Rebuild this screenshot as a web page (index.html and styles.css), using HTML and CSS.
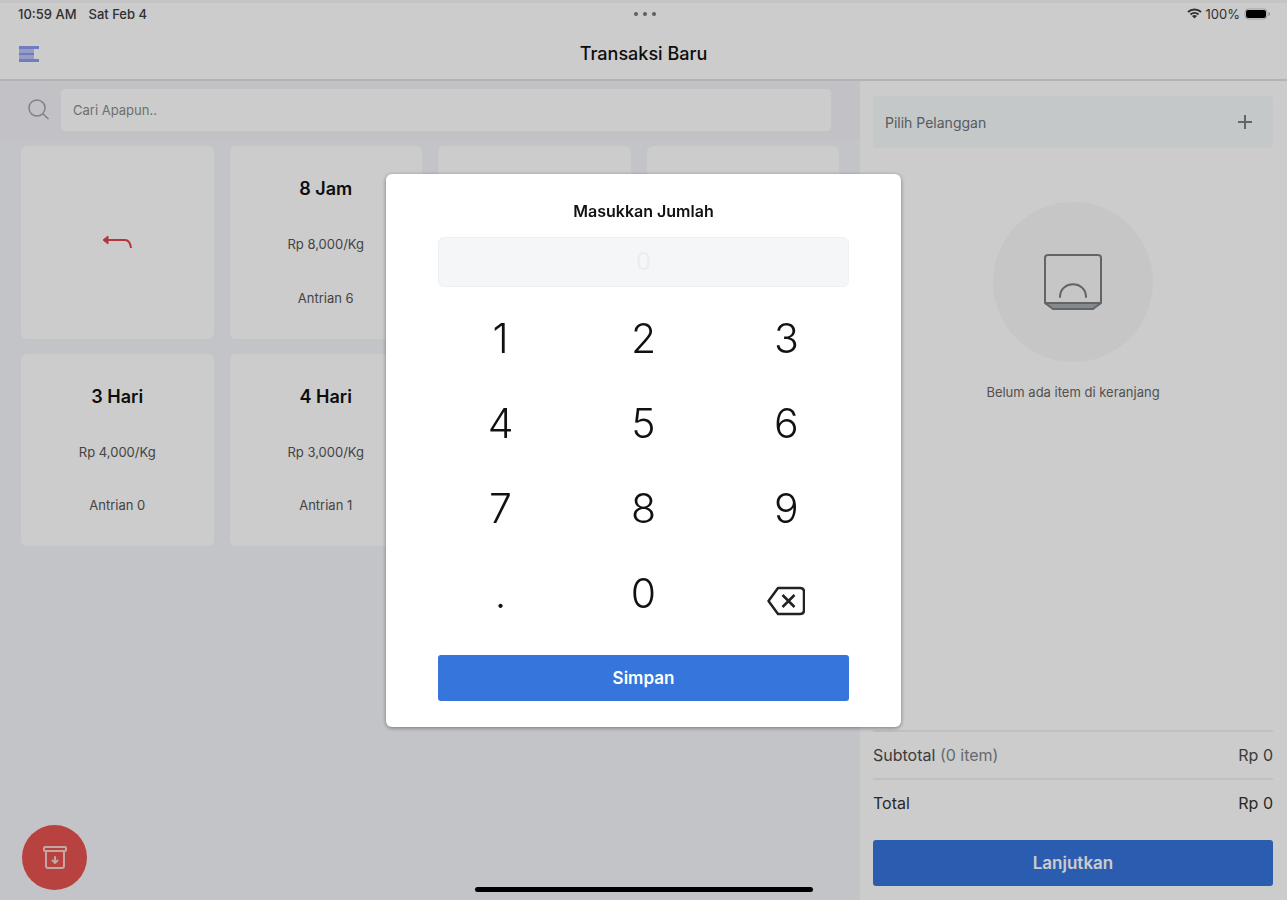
FILE: index.html
```html
<!DOCTYPE html>
<html lang="id">
<head>
<meta charset="utf-8">
<meta name="viewport" content="width=device-width, initial-scale=1">
<title>Transaksi Baru</title>
<link rel="stylesheet" href="styles.css">
</head>
<body>
<div class="app">
  <header class="header">
    <div class="status">
      <div class="status-left"><span>10:59 AM</span><span>Sat Feb 4</span></div>
      <div class="status-dots"><i></i><i></i><i></i></div>
      <div class="status-right">
        <svg width="15" height="11" viewBox="0 0 15 11" fill="none" stroke="currentColor" stroke-width="2"><path d="M1 4a9.500 9.500 0 0 1 13 0M3.500 6.500a6 6 0 0 1 8 0"/><path d="M7.500 10.500 5 8a4 4 0 0 1 5 0z" fill="currentColor" stroke="none"/></svg>
        <span>100%</span>
        <svg width="27" height="12" viewBox="0 0 27 12"><rect x="1" y="1" width="22" height="10" rx="3" fill="none" stroke="#ccc"/><rect x="2" y="2" width="20" height="8" rx="2" fill="#000"/><path d="M24.500 4v4q1.500-.5 1.500-2t-1.500-2" fill="#aaa"/></svg>
      </div>
    </div>
    <div class="navbar">
      <button class="icon-button menu" aria-label="Menu"><svg width="20" height="16" viewBox="0 0 20 16"><path d="M0 3h15v10H0z" fill="#bcc3f4"/><path d="M0 0h20v3H0zM0 7h15v2H0zM0 13h20v3H0z" fill="#8c9cf0"/></svg></button>
      <h1 class="title">Transaksi Baru</h1>
    </div>
  </header>
  <div class="columns">
    <main class="catalog">
      <div class="search">
        <label for="search" aria-label="Cari"><svg width="22" height="22" viewBox="0 0 22 22" fill="none" stroke="#a2a2a2" stroke-width="1.500" stroke-linecap="round"><circle cx="9" cy="9" r="8"/><path d="m15 15 5 4.500"/></svg></label>
        <input id="search" class="search-input" type="text" placeholder="Cari Apapun..">
      </div>
      <div class="cards">
        <button class="card back" aria-label="Kembali"><svg width="32" height="14" viewBox="0 0 32 14" fill="none" stroke="#e4434b" stroke-width="2"><path d="M3 5h21q5 0 6 8"/><path d="M7 1 2 5l5 4z" fill="#e4434b" stroke-width="1"/></svg></button>
        <button class="card"><strong>8 Jam</strong><span>Rp 8,000/Kg</span><span>Antrian 6</span></button>
        <button class="card" aria-label="Layanan"></button>
        <button class="card" aria-label="Layanan"></button>
        <button class="card"><strong>3 Hari</strong><span>Rp 4,000/Kg</span><span>Antrian 0</span></button>
        <button class="card"><strong>4 Hari</strong><span>Rp 3,000/Kg</span><span>Antrian 1</span></button>
      </div>
      <button class="archive" aria-label="Arsip"><svg width="24" height="23" viewBox="0 0 24 23" fill="none" stroke="#f6d0ce" stroke-width="2" stroke-linejoin="round" stroke-linecap="round"><rect x="1" y="1" width="22" height="4" rx="1"/><path d="M3 5v15q0 2 2 2h14q2 0 2-2V5"/><path d="M12 11v6M9.500 14.500 12 17l2.500-2.500"/></svg></button>
    </main>
    <aside class="cart">
      <button class="customer"><span>Pilih Pelanggan</span><svg width="16" height="16" viewBox="0 0 16 16" stroke="#7b8081" stroke-width="2"><path d="M8 1v14M1 8h14"/></svg></button>
      <div class="empty">
        <div class="empty-circle"><svg width="60" height="58" viewBox="0 0 60 58" fill="none" stroke="#7b7e81" stroke-width="2" stroke-linejoin="round" stroke-linecap="round"><rect x="2" y="2" width="56" height="49" rx="3"/><path d="M2 50l8 6h40l8-6z" fill="#a7adb2"/><path d="M17 44c0-17 26-17 26 0"/></svg></div>
        <p>Belum ada item di keranjang</p>
      </div>
      <div class="summary">
        <div class="row subtotal"><span>Subtotal <span class="muted">(0 item)</span></span><span>Rp 0</span></div>
        <div class="row total"><span>Total</span><span>Rp 0</span></div>
        <button class="primary">Lanjutkan</button>
      </div>
    </aside>
  </div>
  <div class="home-bar"></div>
</div>
<div class="overlay">
  <section class="dialog" role="dialog" aria-modal="true" aria-labelledby="dialog-title">
    <h2 id="dialog-title" class="dialog-title">Masukkan Jumlah</h2>
    <input class="amount" type="text" inputmode="decimal" placeholder="0" aria-labelledby="dialog-title">
    <div class="keypad">
      <button>1</button><button>2</button><button>3</button>
      <button>4</button><button>5</button><button>6</button>
      <button>7</button><button>8</button><button>9</button>
      <button class="dot">.</button><button>0</button>
      <button class="erase" aria-label="Hapus"><svg width="38" height="30" viewBox="0 0 38 30" fill="none" stroke="#222" stroke-width="2.500" stroke-linejoin="round"><path d="M11 2h22q4 0 4 4v18q0 4-4 4H11L1.500 15z"/><path d="m15.500 9 12 12m0-12-12 12"/></svg></button>
    </div>
    <button class="primary">Simpan</button>
  </section>
</div>
</body>
</html>
```

FILE: styles.css
```css
* { box-sizing: border-box; }

body {
  margin: 0;
  background: #fff;
  color: #111;
  font-family: Inter, "Liberation Sans", sans-serif;
}

button, input { font: inherit; color: inherit; border: 0; padding: 0; }
button { background: none; cursor: pointer; }
svg { display: block; }
h1, h2, p { margin: 0; }

.app {
  display: flex;
  flex-direction: column;
  min-height: 100vh;
  background: #fff;
}

.header {
  border-top: 3px solid #f6f6f6;
  border-bottom: 2px solid #e0e0e0;
}

.status {
  display: grid;
  grid-template-columns: 1fr auto 1fr;
  align-items: center;
  height: 21px;
  padding: 0 16px 0 18px;
  color: #3c3c3c;
  font-size: 13px;
  font-weight: 500;
}
.status-left { display: flex; gap: 12px; }
.status-dots { display: flex; gap: 5px; }
.status-dots i { width: 4px; height: 4px; border-radius: 50%; background: #777; }
.status-right { display: flex; justify-content: flex-end; align-items: center; gap: 4px; font-weight: 400; }

.navbar {
  display: grid;
  grid-template-columns: 1fr auto 1fr;
  align-items: center;
  height: 55px;
  padding: 4px 19px 0;
}
.menu { justify-self: start; }
.title { font-size: 18px; font-weight: 500; line-height: 24px; }

.columns { display: grid; flex: 1; grid-template-columns: 860fr 427fr; }

.catalog {
  position: relative;
  min-width: 0;
  background: #f4f6fb;
}
.search {
  display: flex;
  align-items: center;
  gap: 11px;
  padding: 8px 29px 8px 28px;
  background: #f2f2f8;
}
.search-input {
  flex: 1;
  min-width: 0;
  height: 42px;
  padding: 0 12px;
  border-radius: 4px;
  background: #fff;
  font-size: 13px;
}
.search-input::placeholder { color: #8b8b8b; opacity: 1; }

.cards {
  display: grid;
  grid-template-columns: repeat(4, 1fr);
  gap: 15px 16px;
  padding: 7px 21px;
}
.card {
  display: flex;
  flex-direction: column;
  align-items: center;
  justify-content: space-between;
  aspect-ratio: 1;
  padding: 32px 0;
  border-radius: 6px;
  background: #fff;
  color: #555;
  font-size: 13px;
  line-height: 18px;
}
.card strong { color: #111; font-size: 18px; font-weight: 600; line-height: 22px; }
.back { justify-content: center; }

.archive {
  position: absolute;
  left: 22px;
  bottom: 10px;
  display: grid;
  place-items: center;
  width: 65px;
  height: 65px;
  border-radius: 50%;
  background: #e5534f;
}

.cart {
  display: flex;
  flex-direction: column;
  min-width: 0;
  padding: 15px 14px 14px 13px;
}
.customer {
  display: flex;
  align-items: center;
  justify-content: space-between;
  height: 52px;
  padding: 0 20px 0 12px;
  border-radius: 4px;
  background: #f7fbfc;
  color: #6c7274;
  font-size: 14px;
}
.empty {
  display: flex;
  flex: 1;
  flex-direction: column;
  align-items: center;
  gap: 20px;
  padding-top: 54px;
  color: #666;
  font-size: 13px;
  line-height: 20px;
}
.empty-circle {
  display: grid;
  place-items: center;
  width: 160px;
  height: 160px;
  border-radius: 50%;
  background: #f8f8f8;
}
.summary { display: flex; flex-direction: column; font-size: 16px; }
.row {
  display: flex;
  align-items: center;
  justify-content: space-between;
  height: 48px;
  border-top: 2px solid #f0f0f0;
}
.subtotal { color: #4c4c4c; }
.muted { color: #80858b; }
.total { color: #333; margin-bottom: 14px; }

.primary {
  width: 100%;
  height: 46px;
  border-radius: 3px;
  background: #3575dc;
  color: #fff;
  font-size: 17px;
  font-weight: 600;
}

.home-bar {
  position: absolute;
  left: 50%;
  bottom: 8px;
  width: 338px;
  height: 5px;
  margin-left: -169px;
  border-radius: 3px;
  background: #000;
}

.overlay {
  position: fixed;
  inset: 0;
  display: grid;
  place-items: center;
  background: rgba(0, 0, 0, 0.2);
}
.dialog {
  display: flex;
  flex-direction: column;
  width: 40%;
  padding: 26px 52px;
  border-radius: 6px;
  background: #fff;
  box-shadow: 0 1px 4px rgba(0, 0, 0, 0.4);
}
.dialog-title {
  margin-bottom: 15px;
  font-size: 16px;
  font-weight: 600;
  line-height: 22px;
  text-align: center;
}
.amount {
  width: 100%;
  height: 50px;
  border: 1px solid #eef1f3;
  border-radius: 6px;
  background: #f4f6f8;
  font-size: 24px;
  text-align: center;
}
.amount::placeholder { color: #e9edef; opacity: 1; }
.keypad {
  display: grid;
  grid-template-columns: repeat(3, 1fr);
  gap: 34px 18px;
  margin: 26px 0 36px;
}
.keypad button {
  height: 51px;
  font-size: 41px;
  font-weight: 300;
  line-height: 51px;
}
.keypad .erase {
  display: grid;
  place-items: end center;
  padding-bottom: 3px;
}
```
